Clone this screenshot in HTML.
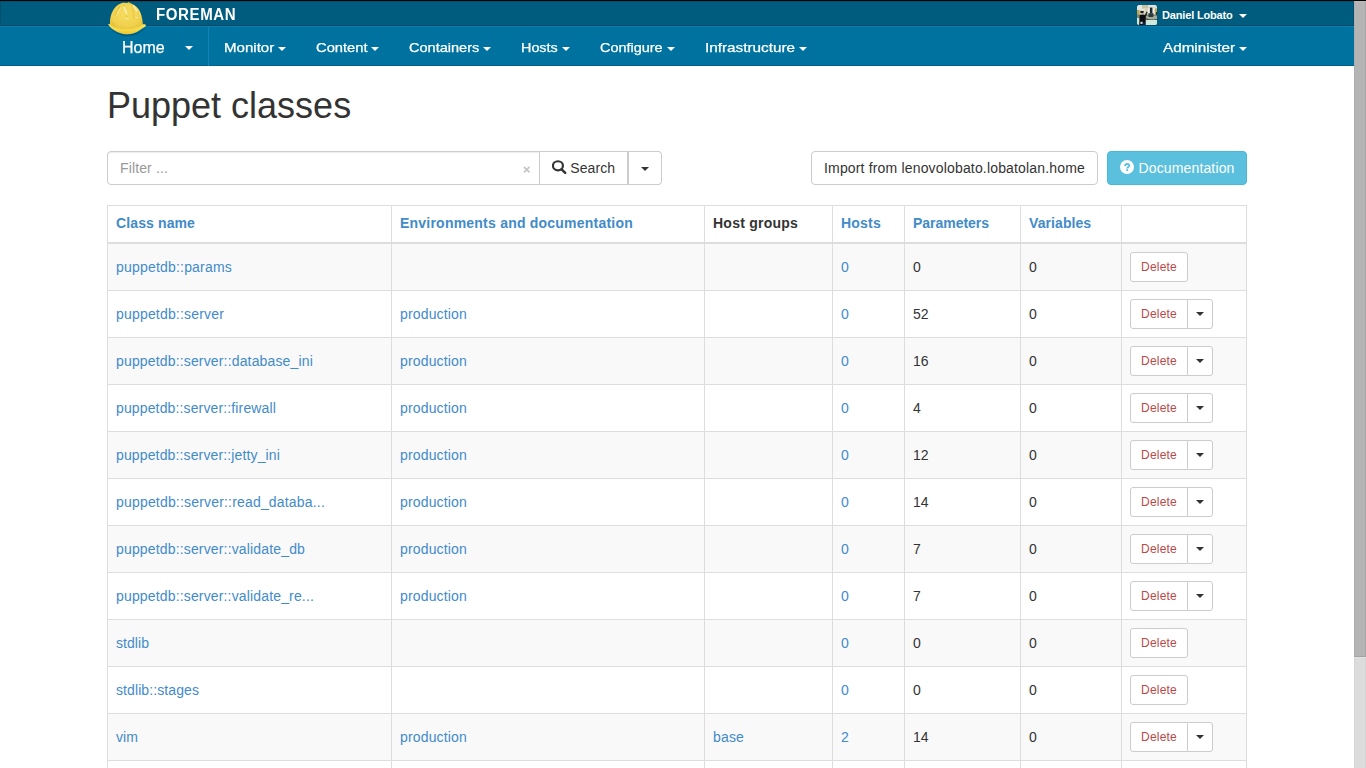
<!DOCTYPE html>
<html>
<head>
<meta charset="utf-8">
<title>Puppet classes</title>
<style>
*{box-sizing:border-box;}
html,body{margin:0;padding:0;}
html{overflow:hidden;}
body{width:1366px;height:768px;overflow:hidden;position:relative;background:#fff;font-family:"Liberation Sans",sans-serif;font-size:14px;line-height:20px;color:#333;}
a{color:#428bca;text-decoration:none;}
i{font-style:normal;}
#page{position:absolute;left:0;top:0;width:1354px;height:768px;overflow:hidden;}
#sb{position:absolute;left:1354px;top:0;width:12px;height:768px;background:#dcdcdc;border-left:1px solid #d5d5d5;border-right:1px solid #d4d4d4;}
#sb i{position:absolute;left:-1px;top:1px;width:12px;height:656px;background:#b4b4b4;border-left:1px solid #adadad;border-right:1px solid #a5a5a5;border-bottom:1px solid #a3a3a3;border-top:1px solid #bcbcbc;box-shadow:0 1px 0 #e3e3e3;}
#topline{position:absolute;left:0;top:0;width:1366px;height:1px;background:#000;}
#bar1{position:absolute;left:0;top:1px;width:1354px;height:25px;background:#005c7e;border:1px solid #005070;border-bottom-color:#00486a;}
#bar2{position:absolute;left:0;top:26px;width:1354px;height:40px;background:#0072a0;border-top:1px solid #0a7fb0;border-bottom:1px solid #00628c;}
.nav{position:absolute;color:#fff;white-space:nowrap;transform-origin:0 50%;}
.brand{left:156.4px;top:6px;font-size:16px;font-weight:bold;line-height:18px;letter-spacing:0.65px;transform:scaleX(0.94);}
.ct,.cd{position:absolute;display:block;width:0;height:0;border-top:4px solid #fff;border-left:4px solid transparent;border-right:4px solid transparent;}
.cd{border-top-color:#333;}
.menu{top:39px;font-size:13px;line-height:18px;font-weight:normal;-webkit-text-stroke:0.25px #fff;}
.home{left:121.8px;top:37.6px;font-size:17px;line-height:20px;-webkit-text-stroke:0.25px #fff;transform:scaleX(0.94);}
#vsep{position:absolute;left:208px;top:27px;width:1px;height:39px;background:#0c85ba;}
.user{top:7px;left:1162px;font-size:11px;font-weight:bold;line-height:16px;letter-spacing:-0.16px;}
h1{position:absolute;left:107px;top:86px;margin:0;font-size:36px;line-height:40px;font-weight:normal;color:#333;letter-spacing:0;}
.filter{position:absolute;left:107px;top:151px;width:433px;height:34px;border:1px solid #ccc;border-radius:4px 0 0 4px;box-shadow:inset 0 1px 1px rgba(0,0,0,.075);padding:6px 12px;color:#999;font-size:14px;line-height:20px;}
.clearx{position:absolute;left:522px;top:159px;font-size:14px;font-weight:bold;color:#ccc;line-height:20px;}
.btn{position:absolute;height:34px;border:1px solid #ccc;background:#fff;color:#333;font-size:14px;line-height:20px;padding:6px 12px;white-space:nowrap;}
.t{position:absolute;left:107px;top:205px;width:1139px;border-collapse:collapse;border-spacing:0;table-layout:fixed;}
.t th,.t td{border:1px solid #ddd;padding:8px;text-align:left;vertical-align:middle;line-height:20px;height:47px;white-space:nowrap;overflow:hidden;}
.t th{height:37px;border-bottom:2px solid #ddd;font-weight:bold;vertical-align:middle;color:#333;padding-top:6px;}
.t th a{color:#428bca;}
.t tr.s td{background:#f9f9f9;}
.bs{position:relative;display:inline-block;height:30px;border:1px solid #ccc;border-radius:3px;background:#fff;color:#b94a48;font-size:12px;line-height:18px;padding:5px 10px;vertical-align:middle;}
.bs.l{border-radius:3px 0 0 3px;}
.bs.r{border-radius:0 3px 3px 0;margin-left:-1px;padding:0;width:26px;}
.bs.r .cd{left:8px;top:12px;}
</style>
</head>
<body>
<div id="page">
<div id="bar1"></div>
<div id="bar2"></div>
<div id="vsep"></div>
<svg id="helmet" style="position:absolute;left:107px;top:1px" width="41" height="36" viewBox="0 0 41 36">
<defs>
<radialGradient id="hg" cx="0.5" cy="0.45" r="0.62"><stop offset="0" stop-color="#f6dc60"/><stop offset="0.7" stop-color="#f1d24f"/><stop offset="1" stop-color="#e6c23c"/></radialGradient>
<linearGradient id="bg" x1="0" y1="0" x2="0" y2="1"><stop offset="0" stop-color="#fbe55c"/><stop offset="0.6" stop-color="#f5d745"/><stop offset="1" stop-color="#e9c437"/></linearGradient>
</defs>
<path d="M2 26 C7 32.5 14 35.3 21 35.3 C28 35.2 35 31.5 39.5 26 C33 31 27 33.5 20.8 33.6 C14 33.6 7 31 2 26 Z" fill="#00486a" opacity=".55"/>
<path d="M1.2 23.5 C2.6 25.6 3.4 26.4 4.4 27.2 C6 28.6 7.6 29.6 9.4 30.4 C11.3 31.4 13.2 32.1 15.3 32.7 C17.1 33.1 19 33.3 20.8 33.3 C22.8 33.2 24.8 32.8 26.7 32.2 C28.8 31.5 30.8 30.4 32.6 29.2 C34.4 28.1 36.1 27.1 37.6 26 C38.3 25.4 38.8 24.9 39.1 24.2 C38.4 23.2 37 23 35.9 23.3 L2.9 23.2 C2.2 22.9 1.4 23 1.2 23.5 Z" fill="url(#bg)"/>
<path d="M2.9 23.4 C2.9 21.5 3 19.6 3.2 17.8 C3.5 16.1 3.8 14.5 4.4 12.9 C5 11.1 5.9 9.4 6.9 7.9 C7.9 6.5 9.1 5.2 10.4 4.2 C11.5 3.4 12.6 2.8 13.8 2.4 C15.6 1.9 17.4 1.8 19.3 1.9 L20.9 1.7 L21.8 1 L22.5 1.8 C23.3 2 24 2.3 24.7 2.7 C26.3 3.4 27.9 4.3 29.2 5.4 C30.6 6.7 31.7 8.2 32.6 9.9 C33.5 11.6 34.1 13.4 34.6 15.3 C35.1 17.1 35.4 19 35.6 20.8 L35.9 23.4 C31 26.6 25 27.8 19.3 27.7 C13.5 27.7 7.5 26.5 2.9 23.4 Z" fill="url(#hg)"/>
<path d="M13.3 2.6 L14.2 1.9 L15 2.3" fill="#f1d24f"/>
<path d="M16.8 4.2 C19 3.4 22.5 3.4 24.8 4.4 C26 8.5 26.6 13 26.4 17.6 C24.5 18.6 21.5 18.7 19.6 18 C19.4 13.2 18.4 8.5 16.8 4.2 Z" fill="#f4d858"/>
<path d="M16.8 4.2 C18.4 8.5 19.4 13.2 19.6 18 M24.8 4.4 C26 8.5 26.6 13 26.4 17.6" stroke="#e0bc38" stroke-width=".8" fill="none" opacity=".75"/>
<path d="M13.2 5.4 C10.8 7.8 8.9 11 7.9 14.6" stroke="#e0bc38" stroke-width="1.1" fill="none" opacity=".85"/>
<path d="M14.6 6 C12.4 8.4 10.6 11.4 9.6 14.6" stroke="#f8e68a" stroke-width="1.3" fill="none" opacity=".8"/>
<path d="M16.9 6.2 C18 8.4 18.9 10.6 19.6 12.6" stroke="#fbf0b0" stroke-width="1.7" fill="none" stroke-linecap="round"/>
<path d="M26.4 5 C27.8 6.4 28.8 8 29.6 9.8" stroke="#fbf0b0" stroke-width="1.7" fill="none" stroke-linecap="round"/>
<path d="M30.8 8 C32.4 10.6 33.2 13.4 33.6 16" stroke="#f7e27a" stroke-width="1" fill="none" opacity=".7"/>
<rect x="18.6" y="16.9" width="3" height="0.9" rx=".4" fill="#fdf7cf"/>
<rect x="28.6" y="15.9" width="2.4" height="0.9" rx=".4" fill="#fdf7cf"/>
<path d="M5.2 21.2 L5.9 25.4 M7.2 22 L7.6 26.2" stroke="#e3bf38" stroke-width=".8" fill="none"/>
<path d="M2.9 23.4 C7.5 26.5 13.5 27.7 19.3 27.7 C25 27.8 31 26.6 35.9 23.4" stroke="#e8c640" stroke-width=".9" fill="none" opacity=".9"/>
</svg>
<div class="nav brand">FOREMAN</div>
<div class="nav home">Home</div>
<i class="ct" style="left:185px;top:46px"></i>
<div class="nav menu" style="left:224.0px;transform:scaleX(1.1582)">Monitor</div><i class="ct" style="left:278px;top:47px"></i>
<div class="nav menu" style="left:316.3px;transform:scaleX(1.1327)">Content</div><i class="ct" style="left:371px;top:47px"></i>
<div class="nav menu" style="left:408.9px;transform:scaleX(1.1175)">Containers</div><i class="ct" style="left:483px;top:47px"></i>
<div class="nav menu" style="left:521.2px;transform:scaleX(1.1055)">Hosts</div><i class="ct" style="left:562px;top:47px"></i>
<div class="nav menu" style="left:600.3px;transform:scaleX(1.1096)">Configure</div><i class="ct" style="left:667px;top:47px"></i>
<div class="nav menu" style="left:705.0px;transform:scaleX(1.1755)">Infrastructure</div><i class="ct" style="left:799px;top:47px"></i>
<div class="nav menu" style="left:1163.4px;transform:scaleX(1.1729)">Administer</div><i class="ct" style="left:1239px;top:47px"></i>

<svg style="position:absolute;left:1137px;top:5px" width="20" height="20" viewBox="0 0 20 20">
<defs><clipPath id="ac"><rect width="20" height="20" rx="2.6"/></clipPath><filter id="ab" x="-10%" y="-10%" width="120%" height="120%"><feGaussianBlur stdDeviation="0.55"/></filter></defs>
<g clip-path="url(#ac)"><rect width="20" height="20" fill="#b9bdb0"/><g filter="url(#ab)">
<rect x="-1" y="-1" width="22" height="11" fill="#d9dad0"/>
<rect x="0" y="0" width="8" height="5" fill="#e4e6e2"/>
<rect x="5" y="0" width="6" height="3.5" fill="#c9c3a0"/>
<rect x="-1" y="5" width="3.6" height="5" fill="#c2a44e"/>
<rect x="17.6" y="3.5" width="3" height="6" fill="#c2a650"/>
<rect x="12" y="0" width="7" height="1.6" fill="#e6e4e4"/>
<rect x="8" y="3" width="3" height="6" fill="#d8d2b4"/>
<rect x="10.8" y="3" width="2.4" height="8" fill="#ecece6"/>
<rect x="15.3" y="3" width="2.4" height="8" fill="#ecece6"/>
<rect x="-1" y="9.5" width="22" height="5" fill="#7d8672"/>
<rect x="9" y="11" width="11" height="3.4" fill="#a9ab9a"/>
<rect x="12.9" y="2.6" width="2.5" height="6" fill="#1f2a33"/>
<path d="M11.4 8.2 L16.6 8.2 L16.2 12 L11.6 12 Z" fill="#2c3840"/>
<rect x="19" y="7" width="1.5" height="3" fill="#2a2a26"/>
<path d="M9 13.2 C12 15 17 15 20.5 13.4 L20.5 14.6 C17 16 12 16 9 14.4 Z" fill="#39453f"/>
<rect x="8.6" y="15" width="12" height="6" fill="#cfeadd"/>
<rect x="-1" y="13" width="3.4" height="6.4" fill="#cfe8dc"/>
<path d="M7.6 10.6 L9.6 6.6 L10.6 7.2 L9 11.4 Z" fill="#1c2220"/>
<rect x="3.7" y="7.6" width="2.9" height="2.6" rx="1" fill="#b9a794"/>
<rect x="3.1" y="5.9" width="3.8" height="2" rx=".8" fill="#23282a"/>
<path d="M2.6 10.4 C3.5 9.6 7.8 9.6 8.8 10.6 L8.6 21 L2.2 21 Z" fill="#0d1112"/>
<rect x="3.4" y="16.8" width="2.4" height="2.2" fill="#c9cdd2"/>
<rect x="5.6" y="17.6" width="2.6" height="3" fill="#1a2350"/>
</g></g>
</svg>
<div class="nav user">Daniel Lobato</div>
<i class="ct" style="left:1239px;top:14px"></i>

<h1>Puppet classes</h1>
<div class="filter"><span style="letter-spacing:0.133px">Filter ...</span></div>
<svg style="position:absolute;left:523px;top:166px" width="8" height="8" viewBox="0 0 8 8"><path d="M0.9 0.9 L6.5 6.3 M6.5 0.9 L0.9 6.3" stroke="#c6c6c9" stroke-width="1.7" fill="none"/></svg>
<div class="btn" style="left:539px;top:151px;width:89px;border-radius:0;">
<svg width="16" height="15" viewBox="0 0 16 15" style="position:absolute;left:12px;top:8px"><ellipse cx="5.95" cy="5.8" rx="5" ry="4.55" fill="none" stroke="#333" stroke-width="2.15"/><path d="M9.6 9.3 L13.2 12.8" stroke="#333" stroke-width="2.5" stroke-linecap="round"/></svg><span style="position:absolute;left:30.2px;top:6px"><span style="letter-spacing:0.107px">Search</span></span></div>
<div class="btn" style="left:627px;top:151px;width:35px;border-radius:0 4px 4px 0;padding:0;border-left:2px solid #ccc"><i class="cd" style="left:12px;top:15px"></i></div>
<div class="btn" style="left:811px;top:151px;width:287px;border-radius:4px;"><span style="letter-spacing:0.167px">Import from lenovolobato.lobatolan.home</span></div>
<div class="btn" style="left:1107px;top:151px;width:140px;border-radius:4px;background:#5bc0de;border-color:#46b8da;color:#fff;">
<svg width="14" height="14" viewBox="0 0 14 14" style="position:absolute;left:12px;top:8px"><circle cx="7" cy="7" r="7" fill="#fff"/><path d="M5.0 6.0 C5.0 4.6 5.9 4.0 7.15 4.0 C8.4 4.0 9.35 4.6 9.35 5.7 C9.35 7.1 7.2 6.9 7.2 8.4" fill="none" stroke="#5bc0de" stroke-width="1.8"/><rect x="6.25" y="9.2" width="1.9" height="1.8" fill="#5bc0de"/></svg><span style="position:absolute;left:30.5px;top:6px"><span style="letter-spacing:0.141px">Documentation</span></span></div>

<table class="t">
<colgroup><col style="width:284px"><col style="width:313px"><col style="width:128px"><col style="width:72px"><col style="width:116px"><col style="width:101px"><col style="width:125px"></colgroup>
<tr><th><a><span style="letter-spacing:0.118px">Class name</span></a></th><th><a><span style="letter-spacing:0.222px">Environments and documentation</span></a></th><th><span style="letter-spacing:0.233px">Host groups</span></th><th><a><span style="letter-spacing:0.221px">Hosts</span></a></th><th><a><span style="letter-spacing:-0.028px">Parameters</span></a></th><th><a><span style="letter-spacing:0.082px">Variables</span></a></th><th></th></tr>
<tr class=s><td><a><span style="letter-spacing:0.197px">puppetdb::params</span></a></td><td></td><td></td><td><a><span style="letter-spacing:0.214px">0</span></a></td><td>0</td><td>0</td><td><span class="bs"><span style="letter-spacing:0.219px">Delete</span></span></td></tr>
<tr><td><a><span style="letter-spacing:0.183px">puppetdb::server</span></a></td><td><a><span style="letter-spacing:0.162px">production</span></a></td><td></td><td><a><span style="letter-spacing:0.214px">0</span></a></td><td>52</td><td>0</td><td><span class="bs l"><span style="letter-spacing:0.219px">Delete</span></span><span class="bs r"><i class="cd"></i></span></td></tr>
<tr class=s><td><a><span style="letter-spacing:0.158px">puppetdb::server::database_ini</span></a></td><td><a><span style="letter-spacing:0.162px">production</span></a></td><td></td><td><a><span style="letter-spacing:0.214px">0</span></a></td><td>16</td><td>0</td><td><span class="bs l"><span style="letter-spacing:0.219px">Delete</span></span><span class="bs r"><i class="cd"></i></span></td></tr>
<tr><td><a><span style="letter-spacing:0.138px">puppetdb::server::firewall</span></a></td><td><a><span style="letter-spacing:0.162px">production</span></a></td><td></td><td><a><span style="letter-spacing:0.214px">0</span></a></td><td>4</td><td>0</td><td><span class="bs l"><span style="letter-spacing:0.219px">Delete</span></span><span class="bs r"><i class="cd"></i></span></td></tr>
<tr class=s><td><a><span style="letter-spacing:0.136px">puppetdb::server::jetty_ini</span></a></td><td><a><span style="letter-spacing:0.162px">production</span></a></td><td></td><td><a><span style="letter-spacing:0.214px">0</span></a></td><td>12</td><td>0</td><td><span class="bs l"><span style="letter-spacing:0.219px">Delete</span></span><span class="bs r"><i class="cd"></i></span></td></tr>
<tr><td><a><span style="letter-spacing:0.183px">puppetdb::server::read_databa...</span></a></td><td><a><span style="letter-spacing:0.162px">production</span></a></td><td></td><td><a><span style="letter-spacing:0.214px">0</span></a></td><td>14</td><td>0</td><td><span class="bs l"><span style="letter-spacing:0.219px">Delete</span></span><span class="bs r"><i class="cd"></i></span></td></tr>
<tr class=s><td><a><span style="letter-spacing:0.157px">puppetdb::server::validate_db</span></a></td><td><a><span style="letter-spacing:0.162px">production</span></a></td><td></td><td><a><span style="letter-spacing:0.214px">0</span></a></td><td>7</td><td>0</td><td><span class="bs l"><span style="letter-spacing:0.219px">Delete</span></span><span class="bs r"><i class="cd"></i></span></td></tr>
<tr><td><a><span style="letter-spacing:0.156px">puppetdb::server::validate_re...</span></a></td><td><a><span style="letter-spacing:0.162px">production</span></a></td><td></td><td><a><span style="letter-spacing:0.214px">0</span></a></td><td>7</td><td>0</td><td><span class="bs l"><span style="letter-spacing:0.219px">Delete</span></span><span class="bs r"><i class="cd"></i></span></td></tr>
<tr class=s><td><a><span style="letter-spacing:0.053px">stdlib</span></a></td><td></td><td></td><td><a><span style="letter-spacing:0.214px">0</span></a></td><td>0</td><td>0</td><td><span class="bs"><span style="letter-spacing:0.219px">Delete</span></span></td></tr>
<tr><td><a><span style="letter-spacing:0.092px">stdlib::stages</span></a></td><td></td><td></td><td><a><span style="letter-spacing:0.214px">0</span></a></td><td>0</td><td>0</td><td><span class="bs"><span style="letter-spacing:0.219px">Delete</span></span></td></tr>
<tr class=s><td><a><span style="letter-spacing:0.076px">vim</span></a></td><td><a><span style="letter-spacing:0.162px">production</span></a></td><td><a><span style="letter-spacing:0.160px">base</span></a></td><td><a><span style="letter-spacing:0.214px">2</span></a></td><td>14</td><td>0</td><td><span class="bs l"><span style="letter-spacing:0.219px">Delete</span></span><span class="bs r"><i class="cd"></i></span></td></tr>
<tr><td>&nbsp;</td><td></td><td></td><td></td><td></td><td></td><td></td></tr>

</table>
</div>
<div id="sb"><i></i></div>
<div id="topline"></div>
</body>
</html>
